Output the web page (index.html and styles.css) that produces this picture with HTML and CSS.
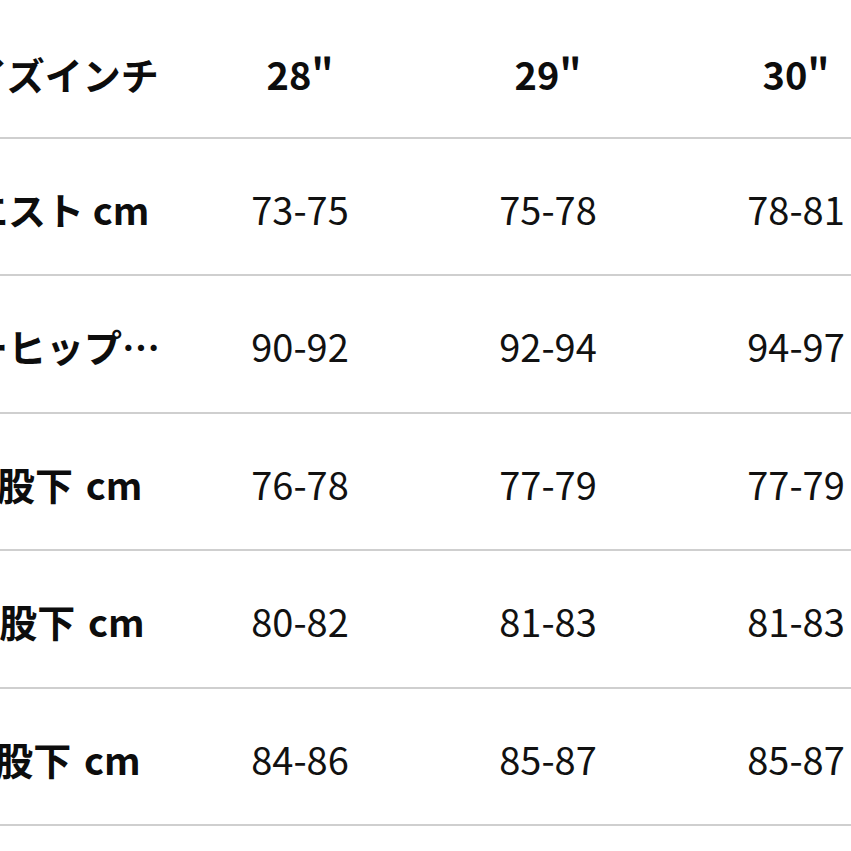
FILE: index.html
```html
<!DOCTYPE html>
<html lang="ja">
<head>
<meta charset="utf-8">
<title>サイズ表</title>
<link rel="stylesheet" href="styles.css">
</head>
<body>
<div class="frame">
  <table class="size-table">
    <colgroup>
      <col class="col-label"><col class="col-val"><col class="col-val"><col class="col-val">
    </colgroup>
    <thead>
      <tr class="head-row">
        <th class="label">サイズインチ</th>
        <th>28"</th>
        <th>29"</th>
        <th>30"</th>
      </tr>
    </thead>
    <tbody>
      <tr>
        <th class="label">ウエスト cm</th>
        <td>73-75</td><td>75-78</td><td>78-81</td>
      </tr>
      <tr>
        <th class="label">ローヒップ cm</th>
        <td>90-92</td><td>92-94</td><td>94-97</td>
      </tr>
      <tr>
        <th class="label crotch">(S) 股下 cm</th>
        <td>76-78</td><td>77-79</td><td>77-79</td>
      </tr>
      <tr>
        <th class="label crotch">(R) 股下 cm</th>
        <td>80-82</td><td>81-83</td><td>81-83</td>
      </tr>
      <tr>
        <th class="label crotch">(L) 股下 cm</th>
        <td>84-86</td><td>85-87</td><td>85-87</td>
      </tr>
    </tbody>
  </table>
</div>
</body>
</html>
```

FILE: styles.css
```css
html, body {
  margin: 0;
  padding: 0;
  background: #ffffff;
}

body {
  width: 851px;
  height: 851px;
  overflow: hidden;
  font-family: "Noto Sans CJK JP", "Noto Sans", sans-serif;
  color: #0d0d0d;
}

.frame {
  margin-left: -72px;
}

.size-table {
  width: 992px;
  table-layout: fixed;
  border-collapse: collapse;
  border-spacing: 0;
}

.col-label { width: 248px; }
.col-val { width: 248px; }

.size-table th,
.size-table td {
  padding: 0;
  font-size: 38px;
  line-height: 50px;
  text-align: center;
  vertical-align: top;
  border-bottom: 2px solid #cfcfcf;
}

.size-table th {
  font-weight: 700;
}

.size-table td {
  font-weight: 400;
  color: #111111;
}

.size-table .label {
  text-align: left;
  padding-left: 4px;
  padding-right: 12px;
  white-space: nowrap;
  overflow: hidden;
  text-overflow: ellipsis;
}

.size-table .crotch {
  word-spacing: 4px;
}

.size-table .head-row th {
  height: 88px;
  padding-top: 49px;
}

.size-table tbody th,
.size-table tbody td {
  padding-top: 45px;
}

.size-table tbody tr {
  height: 137.4px;
}
```
